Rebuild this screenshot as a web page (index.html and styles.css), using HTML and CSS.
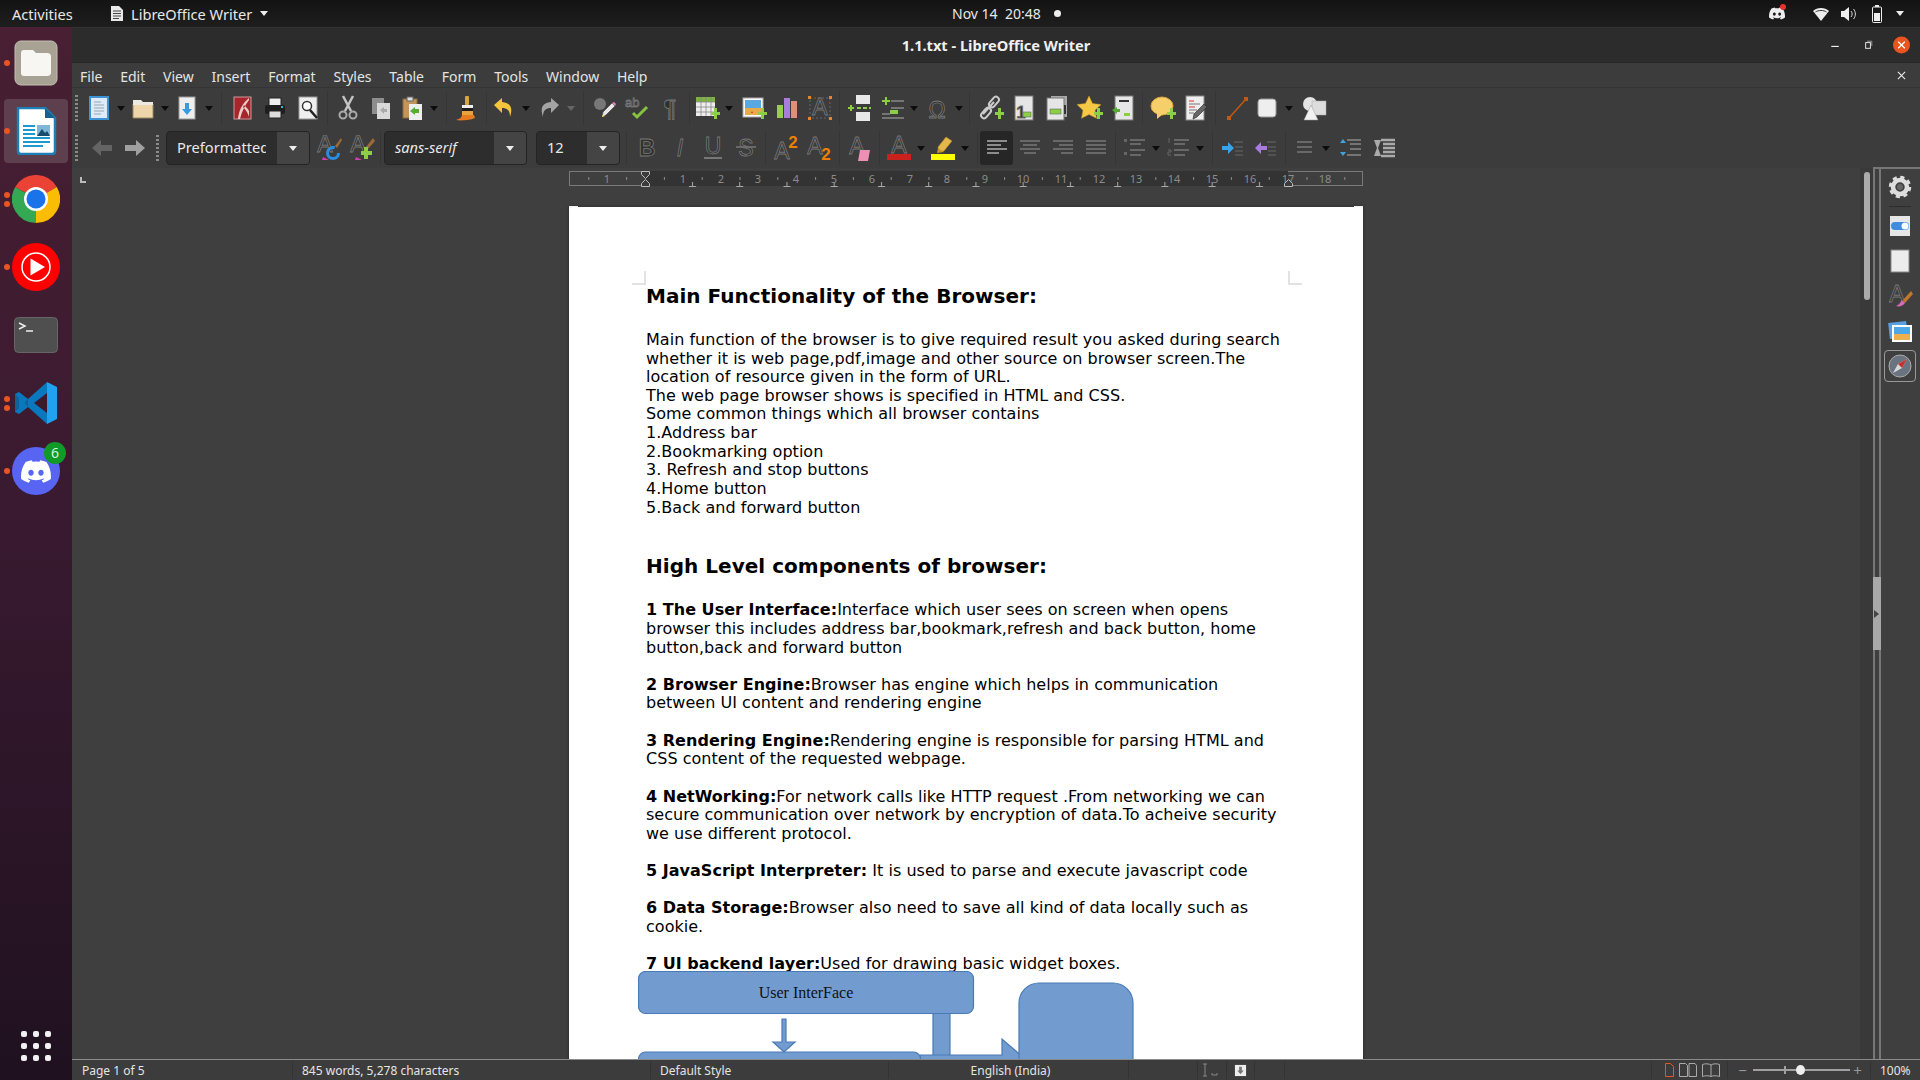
FILE: index.html
```html
<!DOCTYPE html>
<html lang="en">
<head>
    <meta charset="utf-8"/>
    <title>1.1.txt - LibreOffice Writer</title>
    <link rel="stylesheet" href="styles.css">
</head>
<body>
    <svg class="defs" xmlns="http://www.w3.org/2000/svg">
        <defs>
            <path id="plus" d="M17 17h3v-4h3v4h3v3h-3v4h-3v-4h-3z" fill="#8ccf45"/>
            <symbol id="i-new" viewBox="0 0 26 26"><rect x="4" y="2" width="18" height="22" fill="#dcebf7" stroke="#3d93d6" stroke-width="2"/><path d="M8 7h7M8 10h10M8 13h10M8 16h10M8 19h7" stroke="#9aa7b0"/></symbol>
            <symbol id="i-open" viewBox="0 0 26 26"><path d="M3 9h20v14H3z" fill="#efd6aa" stroke="#9c8660"/><path d="M3 5h8l2 2h10v3H3z" fill="#ece9e2"/></symbol>
            <symbol id="i-save" viewBox="0 0 26 26"><rect x="5" y="2" width="16" height="22" fill="#eee" stroke="#999"/><path d="M11 8h4v6h3l-5 6-5-6h3z" fill="#3a9ae0"/></symbol>
            <symbol id="i-pdf" viewBox="0 0 26 26"><rect x="5" y="2" width="17" height="22" fill="#a8252c" stroke="#c99"/><path d="M9 24C10 14 14 8 20 3v2C16 10 13 16 11 24zM14 12c3 3 5 6 6 10v-6c-1-2-3-4-5-6z" fill="#e8d0c8"/></symbol>
            <symbol id="i-print" viewBox="0 0 26 26"><rect x="7" y="3" width="12" height="8" fill="#eee" stroke="#222"/><rect x="3" y="10" width="20" height="9" rx="2" fill="#1e1e1e"/><rect x="7" y="16" width="12" height="7" fill="#ddd" stroke="#222"/><rect x="19" y="11" width="2" height="2" fill="#2bd"/></symbol>
            <symbol id="i-preview" viewBox="0 0 26 26"><rect x="4" y="2" width="18" height="22" fill="#eee" stroke="#999"/><circle cx="12" cy="11" r="4.500" fill="#fff" stroke="#333" stroke-width="1.500"/><path d="M15 15l7 8" stroke="#222" stroke-width="2.500"/></symbol>
            <symbol id="i-cut" viewBox="0 0 26 26"><path d="M10 16L18 1M16 16L8 1" stroke="#c4c4c4" stroke-width="2.500"/><circle cx="8" cy="20" r="3.500" fill="none" stroke="#aaa" stroke-width="2"/><circle cx="18" cy="20" r="3.500" fill="none" stroke="#aaa" stroke-width="2"/></symbol>
            <symbol id="i-copy" viewBox="0 0 26 26"><rect x="4" y="3" width="12" height="16" fill="#8e8e8e"/><rect x="9" y="8" width="13" height="16" fill="#d9d9d9"/><path d="M12 15l4-3v2h3v3h-3v2z" fill="#aaa"/></symbol>
            <symbol id="i-paste" viewBox="0 0 26 26"><rect x="4" y="4" width="14" height="19" fill="#c2965a" stroke="#8d6a3a"/><rect x="8" y="2" width="6" height="4" fill="#ddd" stroke="#666"/><rect x="10" y="9" width="13" height="16" fill="#eee"/><path d="M11 16l5-4v2h4v4h-4v2z" fill="#58ac32"/></symbol>
            <symbol id="i-clone" viewBox="0 0 26 26"><rect x="11" y="1" width="4" height="9" rx="1" fill="#d9a441"/><rect x="8" y="10" width="11" height="3" fill="#eee"/><rect x="8" y="13" width="11" height="3" fill="#1d1d1d"/><path d="M8 16h11v4H8z" fill="#e8a33d"/><path d="M2 25c4-1 6-3 6-5h12l1 3c-4 2-14 3-19 2z" fill="#e87b1e"/></symbol>
            <symbol id="i-undo" viewBox="0 0 26 26"><path d="M11 3L3 10l8 8v-5c5 0 8 2 8 9 3-9 1-14-8-15z" fill="#f2c53d"/></symbol>
            <symbol id="i-redo" viewBox="0 0 26 26"><path d="M15 3l8 7-8 8v-5c-5 0-8 2-8 9-3-9-1-14 8-15z" fill="#a4a4a4"/></symbol>
            <symbol id="i-find" viewBox="0 0 26 26"><circle cx="9" cy="9" r="6" fill="#777"/><path d="M11 22l1-5 9-9 3 3-9 9z" fill="#e8e8e8" stroke="#444" stroke-width=".7"/><path d="M21 8l3 3 1-2-2-2z" fill="#e77fc0"/><path d="M11 22l1-3 2 2z" fill="#f3e26d"/></symbol>
            <symbol id="i-spell" viewBox="0 0 26 26"><text x="1" y="12" class="glyph glyph-sm">ab</text><path d="M9 18l4 4 10-10" fill="none" stroke="#86c440" stroke-width="3"/></symbol>
            <symbol id="i-para" viewBox="0 0 26 26"><text x="13" y="22" class="glyph glyph-mid">¶</text></symbol>
            <symbol id="i-table" viewBox="0 0 26 26"><rect x="2" y="2" width="19" height="19" fill="#eee"/><rect x="2" y="2" width="19" height="5" fill="#7cb342"/><path d="M7 2v19M12 2v19M17 2v19M2 7h19M2 12h19M2 17h19" stroke="#888" stroke-width=".8"/><use href="#plus"/></symbol>
            <symbol id="i-image" viewBox="0 0 26 26"><rect x="2" y="3" width="20" height="19" fill="#fff" stroke="#aaa"/><rect x="4" y="5" width="16" height="8" fill="#5aa8e0"/><rect x="4" y="13" width="16" height="7" fill="#e8ab4c"/><path d="M11 16l1 2-2 0z" fill="#c33"/><use href="#plus"/></symbol>
            <symbol id="i-chart" viewBox="0 0 26 26"><rect x="3" y="10" width="6" height="13" fill="#94cf4f"/><rect x="10" y="3" width="6" height="20" fill="#a77fd9"/><rect x="17" y="6" width="6" height="17" fill="#e0907a"/></symbol>
            <symbol id="i-textbox" viewBox="0 0 26 26"><rect x="3" y="3" width="20" height="20" fill="none" stroke="#666" stroke-dasharray="2 2"/><text x="13" y="20" class="glyph glyph-big">A</text><path d="M1 1h3v3H1zM22 1h3v3h-3zM1 22h3v3H1zM22 22h3v3h-3z" fill="#e8842c"/></symbol>
            <symbol id="i-break" viewBox="0 0 26 26"><rect x="9" y="0" width="14" height="9" fill="#e8e8e8"/><rect x="9" y="17" width="14" height="9" fill="#e8e8e8"/><path d="M10 13h14" stroke="#8ccf45" stroke-width="2" stroke-dasharray="4 2"/><path d="M1 12h2v-2h2v2h2v2H5v2H3v-2H1z" fill="#8ccf45"/></symbol>
            <symbol id="i-field" viewBox="0 0 26 26"><path d="M11 6h13M11 13h13M2 19h8M2 23h22" stroke="#888" stroke-width="1.500"/><path d="M2 5h3V2h2v3h3v2H7v3H5V7H2zM10 15h8v4h-8z" fill="#8ccf45"/></symbol>
            <symbol id="i-omega" viewBox="0 0 26 26"><text x="13" y="23" class="glyph glyph-big">Ω</text></symbol>
            <symbol id="i-link" viewBox="0 0 26 26"><path d="M5 19l11-12" stroke="#ccc" stroke-width="2"/><rect x="13" y="1" width="6" height="12" rx="3" transform="rotate(40 16 7)" fill="none" stroke="#ccc" stroke-width="2"/><rect x="5" y="12" width="6" height="12" rx="3" transform="rotate(40 8 18)" fill="none" stroke="#ccc" stroke-width="2"/><use href="#plus"/></symbol>
            <symbol id="i-foot" viewBox="0 0 26 26"><rect x="4" y="1" width="18" height="24" fill="#e6e6e6" stroke="#777"/><text x="10" y="23" class="glyph glyph-note">1</text><rect x="12" y="17" width="8" height="5" fill="#8ccf45" stroke="#555" stroke-width=".5"/></symbol>
            <symbol id="i-end" viewBox="0 0 26 26"><rect x="7" y="1" width="16" height="21" fill="#aaa"/><rect x="3" y="3" width="17" height="22" fill="#e6e6e6" stroke="#777"/><rect x="6" y="14" width="11" height="5" fill="#8ccf45" stroke="#555" stroke-width=".5"/><path d="M21 10v9" stroke="#333" stroke-width="2"/></symbol>
            <symbol id="i-star" viewBox="0 0 26 26"><path d="M12 1l3.500 7.500L24 9.600l-6 5.700 1.500 8L12 19.500 4.500 23.300 6 15.300 0 9.600l8.500-1.100z" fill="#f6c945" stroke="#c99a1f" stroke-width=".5"/><use href="#plus"/></symbol>
            <symbol id="i-xref" viewBox="0 0 26 26"><rect x="5" y="1" width="18" height="24" fill="#e6e6e6" stroke="#777"/><path d="M9 6h10" stroke="#333" stroke-width="2"/><rect x="14" y="18" width="6" height="3" fill="#8ccf45"/><path d="M2 15l5-3v2h3v3H7v2z" fill="#58ac32"/></symbol>
            <symbol id="i-comment" viewBox="0 0 26 26"><ellipse cx="12" cy="11" rx="11" ry="9" fill="#f7cf6a" stroke="#d9a43a"/><path d="M7 18v6l6-5z" fill="#f7cf6a"/><use href="#plus"/></symbol>
            <symbol id="i-track" viewBox="0 0 26 26"><rect x="3" y="1" width="18" height="24" fill="#eee" stroke="#888"/><path d="M6 6h5M6 12h6" stroke="#d33"/><path d="M6 9h11M6 15h8M6 18h5" stroke="#777"/><path d="M10 24l1-5 10-10 3 3-10 10z" fill="#666" stroke="#222" stroke-width=".6"/></symbol>
            <symbol id="i-line" viewBox="0 0 26 26"><path d="M4 23L21 4" stroke="#bd5a17" stroke-width="1.500"/><path d="M2 21h4v4H2zM19 2h4v4h-4z" fill="#bd5a17"/></symbol>
            <symbol id="i-rect" viewBox="0 0 26 26"><rect x="4" y="4" width="18" height="18" rx="3" fill="#eee" stroke="#999"/></symbol>
            <symbol id="i-shapes" viewBox="0 0 26 26"><circle cx="8" cy="9" r="7" fill="#e5e5e5"/><rect x="10" y="6" width="14" height="14" fill="#ddd" stroke="#aaa" stroke-width=".5"/><path d="M9 10l7 15H2z" fill="#f2f2f2" stroke="#999" stroke-width=".5"/></symbol>
            <symbol id="i-back" viewBox="0 0 26 26"><path d="M12 5l-9 8 9 8v-5h11v-6H12z" fill="#646464"/></symbol>
            <symbol id="i-fwd" viewBox="0 0 26 26"><path d="M14 5l9 8-9 8v-5H3v-6h11z" fill="#a0a0a0"/></symbol>
            <symbol id="i-a-up" viewBox="0 0 26 26"><text x="9" y="17" class="glyph glyph-big">A</text><circle cx="17" cy="18" r="5.500" fill="none" stroke="#2a8de0" stroke-width="3" stroke-dasharray="27 7"/><path d="M25 3l-6 8 2 2 5-8z" fill="#9a6a3a"/><path d="M7 22l6 3H6z" fill="#d040b0"/></symbol>
            <symbol id="i-a-new" viewBox="0 0 26 26"><text x="9" y="17" class="glyph glyph-big">A</text><path d="M24 3l-7 9 2 2 7-8z" fill="#9a6a3a"/><path d="M7 22l6 3H6z" fill="#d040b0"/><path d="M12 16h3v-4h4v4h4v4h-4v4h-4v-4h-3z" fill="#8ccf45"/></symbol>
            <symbol id="i-b" viewBox="0 0 26 26"><text x="13" y="21" class="glyph glyph-big glyph-bold">B</text></symbol>
            <symbol id="i-i" viewBox="0 0 26 26"><text x="13" y="21" class="glyph glyph-big glyph-ital">I</text></symbol>
            <symbol id="i-u" viewBox="0 0 26 26"><text x="13" y="19" class="glyph glyph-big">U</text><path d="M4 23h18" stroke="#777" stroke-width="2"/></symbol>
            <symbol id="i-s" viewBox="0 0 26 26"><text x="13" y="21" class="glyph glyph-big">S</text><path d="M3 12h20" stroke="#777" stroke-width="1.500"/></symbol>
            <symbol id="i-sup" viewBox="0 0 26 26"><text x="9" y="24" class="glyph glyph-big">A</text><text x="20" y="13" class="orange">2</text></symbol>
            <symbol id="i-sub" viewBox="0 0 26 26"><text x="9" y="19" class="glyph glyph-big">A</text><text x="20" y="25" class="orange">2</text></symbol>
            <symbol id="i-clear" viewBox="0 0 26 26"><text x="10" y="19" class="glyph glyph-big">A</text><path d="M13 15h10l-2 11H11z" fill="#ee8fb4"/></symbol>
            <symbol id="i-color" viewBox="0 0 26 26"><text x="13" y="18" class="glyph glyph-big">A</text><rect x="1" y="19" width="24" height="6" fill="#c9211e"/></symbol>
            <symbol id="i-hl" viewBox="0 0 26 26"><path d="M9 17l-1-5 8-10 6 4-8 10z" fill="#e6b84a" stroke="#a8842c" stroke-width=".6"/><path d="M8 13l6 4-7 1z" fill="#c7942c"/><rect x="1" y="19" width="24" height="6" fill="#ff0"/></symbol>
            <symbol id="i-left" viewBox="0 0 26 26"><path d="M3 6h20M3 10h14M3 14h20M3 18h12" stroke="#8c8c8c" stroke-width="2"/></symbol>
            <symbol id="i-center" viewBox="0 0 26 26"><path d="M3 6h20M6 10h14M3 14h20M7 18h12" stroke="#777" stroke-width="1.500"/></symbol>
            <symbol id="i-right" viewBox="0 0 26 26"><path d="M3 6h20M9 10h14M3 14h20M11 18h12" stroke="#777" stroke-width="1.500"/></symbol>
            <symbol id="i-just" viewBox="0 0 26 26"><path d="M3 6h20M3 10h20M3 14h20M3 18h20" stroke="#777" stroke-width="1.500"/></symbol>
            <symbol id="i-bullet" viewBox="0 0 26 26"><path d="M9 5h15M9 9h11M9 15h15M9 20h11" stroke="#777" stroke-width="1.500"/><path d="M3 4h3v3H3zM3 17h3v3H3z" fill="#666"/></symbol>
            <symbol id="i-number" viewBox="0 0 26 26"><path d="M9 5h15M9 9h11M9 15h15M9 20h11" stroke="#777" stroke-width="1.500"/><path d="M4 3v5M3 15h3v2H3v3h3" stroke="#666" fill="none"/></symbol>
            <symbol id="i-more" viewBox="0 0 26 26"><path d="M14 7h9M15 12h8M15 16h8M15 20h8" stroke="#5a5a5a" stroke-width="1.500"/><path d="M8 7l6 6-6 6v-4H2v-4h6z" fill="#3aa3e8"/></symbol>
            <symbol id="i-less" viewBox="0 0 26 26"><path d="M14 7h9M15 12h8M15 16h8M15 20h8" stroke="#5a5a5a" stroke-width="1.500"/><path d="M8 7l-6 6 6 6v-4h6v-4H8z" fill="#a97be0"/></symbol>
            <symbol id="i-spacing" viewBox="0 0 26 26"><path d="M6 7h15M6 12h15M6 17h15" stroke="#777" stroke-width="1.500"/></symbol>
            <symbol id="i-para-up" viewBox="0 0 26 26"><path d="M9 5h14M12 9h11M12 14h11M9 20h14" stroke="#888" stroke-width="1.500"/><path d="M5 4l3 4H2zM5 21l3-4H2z" fill="#3aa3e8"/></symbol>
            <symbol id="i-para-down" viewBox="0 0 26 26"><path d="M10 5h14M12 9h12M12 13h12M12 17h12M10 21h14" stroke="#aaa" stroke-width="2.500"/><path d="M3 5h7l-3 8 3 8H3l3-8z" fill="#aaa"/></symbol>
            <symbol id="discord" viewBox="0 0 127.140 96.360"><path d="M107.700,8.070A105.150,105.150,0,0,0,81.470,0a72.060,72.060,0,0,0-3.360,6.830A97.680,97.680,0,0,0,49,6.830,72.370,72.370,0,0,0,45.640,0,105.890,105.890,0,0,0,19.390,8.090C2.790,32.650-1.710,56.600.54,80.210h0A105.730,105.730,0,0,0,32.710,96.360,77.700,77.700,0,0,0,39.600,85.250a68.420,68.420,0,0,1-10.850-5.180c.91-.66,1.800-1.340,2.660-2a75.570,75.570,0,0,0,64.320,0c.87.71,1.760,1.390,2.660,2a68.680,68.680,0,0,1-10.870,5.190,77,77,0,0,0,6.890,11.100A105.250,105.250,0,0,0,126.600,80.220h0C129.240,52.840,122.090,29.110,107.700,8.070ZM42.450,65.690C36.180,65.690,31,60,31,53s5-12.740,11.430-12.740S54,46,53.890,53,48.840,65.690,42.450,65.690Zm42.240,0C78.410,65.690,73.250,60,73.250,53s5-12.740,11.440-12.740S96.230,46,96.120,53,91.080,65.690,84.690,65.690Z" fill="currentColor"/></symbol>
        </defs>
    </svg>

    <div class="topbar">
        <div class="top-left">
            <span class="activities">Activities</span>
            <svg class="top-doc" viewBox="0 0 12 15"><path d="M0 0h8l4 4v11H0z" fill="#e8e8e8"/><path d="M2 5h8M2 7.500h8M2 10h8M2 12.500h6" stroke="#444"/></svg>
            <span>LibreOffice Writer</span>
            <span class="caret"></span>
        </div>
        <div class="clock">Nov 14&nbsp; 20:48</div>
        <span class="rec-dot"></span>
        <div class="tray">
            <span class="tray-discord"><svg class="tray-logo"><use href="#discord"/></svg><span class="tray-alert"></span></span>
            <svg class="tray-wifi" viewBox="0 0 16 14"><path d="M0 4C4 0 12 0 16 4L8 14z" fill="#eee"/><path d="M2.500 5C5 3 11 3 13.500 5" stroke="#333" fill="none"/></svg>
            <svg class="tray-vol" viewBox="0 0 16 14"><path d="M0 4h3l5-4v14l-5-4H0z" fill="#eee"/><path d="M10 4c1.500 2 1.500 4 0 6M12.500 2c2.500 3 2.500 7 0 10" stroke="#ddd" fill="none"/></svg>
            <svg class="tray-batt" viewBox="0 0 10 18"><path d="M3 0h4v2H3z" fill="#eee"/><rect x=".5" y="2" width="9" height="15.500" rx="1" fill="none" stroke="#eee"/><rect x="2" y="8" width="6" height="8" fill="#eee"/></svg>
            <span class="caret"></span>
        </div>
    </div>

    <div class="desktop">
        <div class="dock">
            <div class="dock-item">
                <span class="run-dot"></span>
                <svg class="dock-icon" viewBox="0 0 48 48"><rect x="3" y="2" width="42" height="44" rx="6" fill="#a8a294" stroke="#c4bfb2"/><path d="M9 14c0-2 1-3 3-3h9l3 3h11c2 0 4 1 4 3v17c0 2-2 3-4 3H12c-2 0-3-1-3-3z" fill="#f7f6f3"/></svg>
            </div>
            <div class="dock-item dock-active">
                <span class="run-dot"></span>
                <svg class="dock-icon" viewBox="0 0 48 48"><path d="M6 1h27l10 10v33c0 2-1 3-3 3H9c-2 0-3-1-3-3z" fill="#fff" stroke="#1d7fb8" stroke-width="2.500"/><path d="M33 1v10h10z" fill="#16628e"/><path d="M11 19h12M11 23h12M11 27h12M11 31h27M11 35h27M11 39h20" stroke="#1d99d0" stroke-width="2"/><rect x="25" y="18" width="13" height="11" fill="#7fb8d6"/><path d="M25 29l5-7 3 4 2-2 3 5z" fill="#184c6c"/></svg>
            </div>
            <div class="dock-item">
                <span class="run-dot run-dot-a"></span>
                <span class="run-dot run-dot-b"></span>
                <svg class="dock-icon" viewBox="0 0 48 48"><path d="M24 24L3.200 12A24 24 0 0 1 44.800 12z" fill="#ea4335"/><path d="M24 24L44.800 12A24 24 0 0 1 24 48z" fill="#fbbc04"/><path d="M24 24L24 48A24 24 0 0 1 3.200 12z" fill="#34a853"/><circle cx="24" cy="24" r="12" fill="#fff"/><circle cx="24" cy="24" r="9.500" fill="#1a73e8"/></svg>
            </div>
            <div class="dock-item">
                <span class="run-dot"></span>
                <svg class="dock-icon" viewBox="0 0 48 48"><circle cx="24" cy="24" r="24" fill="#f00"/><circle cx="24" cy="24" r="14" fill="none" stroke="#fff" stroke-width="1.500"/><path d="M18.500 15.500L33 24l-14.500 8.500z" fill="#fff"/></svg>
            </div>
            <div class="dock-item">
                <svg class="dock-icon" viewBox="0 0 48 48"><rect x="2.500" y="6.500" width="43" height="35" rx="4" fill="#4f4f4f" stroke="#666"/><path d="M7 12l6 3-6 3" fill="none" stroke="#eee" stroke-width="1.500"/><path d="M14 20h7" stroke="#eee" stroke-width="1.500"/></svg>
            </div>
            <div class="dock-item">
                <span class="run-dot run-dot-a"></span>
                <span class="run-dot run-dot-b"></span>
                <svg class="dock-icon" viewBox="0 0 48 48"><path d="M35 3L16 20 7 13 3 15v18l4 2 9-7 19 17z" fill="#0a78bd"/><path d="M3 15l9 9-9 9zM12 24l4-4 0 8z" fill="#11609a"/><path d="M7 18l7 6-7 6z" fill="#0a78bd"/><path d="M35 14L22 24l13 10z" fill="#3a1a2c"/><path d="M35 3l10 5v32l-10 5z" fill="#21a2f0"/></svg>
            </div>
            <div class="dock-item">
                <span class="run-dot"></span>
                <span class="dock-discord"><svg class="discord-logo"><use href="#discord"/></svg></span>
                <span class="badge">6</span>
            </div>
            <div class="apps-grid">
                <i></i><i></i><i></i><i></i><i></i><i></i><i></i><i></i><i></i>
            </div>
        </div>

        <div class="window">
            <div class="titlebar">
                <span></span>
                <span class="title">1.1.txt - LibreOffice Writer</span>
                <div class="win-btns">
                    <svg class="win-btn" viewBox="0 0 33 36"><path d="M12 19.500h8" stroke="#eee" stroke-width="1.200"/></svg>
                    <svg class="win-btn" viewBox="0 0 33 36"><rect x="13.500" y="15.500" width="5" height="6" fill="none" stroke="#eee"/><path d="M15 14h5v5" fill="none" stroke="#999"/></svg>
                    <svg class="win-btn" viewBox="0 0 33 36"><circle cx="16.500" cy="18" r="9" fill="#e95420"/><path d="M13 14.500l7 7m0-7l-7 7" stroke="#fff" stroke-width="1.300"/></svg>
                </div>
            </div>

            <div class="menubar">
                <span class="menu-item">File</span>
                <span class="menu-item">Edit</span>
                <span class="menu-item">View</span>
                <span class="menu-item">Insert</span>
                <span class="menu-item">Format</span>
                <span class="menu-item">Styles</span>
                <span class="menu-item">Table</span>
                <span class="menu-item">Form</span>
                <span class="menu-item">Tools</span>
                <span class="menu-item">Window</span>
                <span class="menu-item">Help</span>
                <svg class="doc-close" viewBox="0 0 10 10"><path d="M1 1l8 8m0-8L1 9" stroke="#eee" stroke-width="1.200"/></svg>
            </div>

            <div class="toolbar">
                <span class="grip"></span>
                <span class="tool split"><svg class="ic"><use href="#i-new"/></svg></span><span class="dd"></span>
                <span class="tool split"><svg class="ic"><use href="#i-open"/></svg></span><span class="dd"></span>
                <span class="tool split"><svg class="ic"><use href="#i-save"/></svg></span><span class="dd"></span>
                <span class="sep"></span>
                <span class="tool"><svg class="ic"><use href="#i-pdf"/></svg></span>
                <span class="tool"><svg class="ic"><use href="#i-print"/></svg></span>
                <span class="tool"><svg class="ic"><use href="#i-preview"/></svg></span>
                <span class="sep"></span>
                <span class="tool"><svg class="ic"><use href="#i-cut"/></svg></span>
                <span class="tool"><svg class="ic"><use href="#i-copy"/></svg></span>
                <span class="tool split m2"><svg class="ic"><use href="#i-paste"/></svg></span><span class="dd"></span>
                <span class="sep"></span>
                <span class="tool"><svg class="ic"><use href="#i-clone"/></svg></span>
                <span class="sep"></span>
                <span class="tool split m1"><svg class="ic"><use href="#i-undo"/></svg></span><span class="dd"></span>
                <span class="tool split m1"><svg class="ic"><use href="#i-redo"/></svg></span><span class="dd dd-off"></span>
                <span class="sep"></span>
                <span class="tool"><svg class="ic"><use href="#i-find"/></svg></span>
                <span class="tool"><svg class="ic"><use href="#i-spell"/></svg></span>
                <span class="tool"><svg class="ic"><use href="#i-para"/></svg></span>
                <span class="sep"></span>
                <span class="tool split m1"><svg class="ic"><use href="#i-table"/></svg></span><span class="dd"></span>
                <span class="tool mn1"><svg class="ic"><use href="#i-image"/></svg></span>
                <span class="tool"><svg class="ic"><use href="#i-chart"/></svg></span>
                <span class="tool"><svg class="ic"><use href="#i-textbox"/></svg></span>
                <span class="sep"></span>
                <span class="tool"><svg class="ic"><use href="#i-break"/></svg></span>
                <span class="tool split m4"><svg class="ic"><use href="#i-field"/></svg></span><span class="dd dd-tight"></span>
                <span class="tool split m2"><svg class="ic"><use href="#i-omega"/></svg></span><span class="dd"></span>
                <span class="sep mn2"></span>
                <span class="tool m1"><svg class="ic"><use href="#i-link"/></svg></span>
                <span class="tool"><svg class="ic"><use href="#i-foot"/></svg></span>
                <span class="tool"><svg class="ic"><use href="#i-end"/></svg></span>
                <span class="tool"><svg class="ic"><use href="#i-star"/></svg></span>
                <span class="tool"><svg class="ic"><use href="#i-xref"/></svg></span>
                <span class="sep"></span>
                <span class="tool"><svg class="ic"><use href="#i-comment"/></svg></span>
                <span class="tool"><svg class="ic"><use href="#i-track"/></svg></span>
                <span class="sep"></span>
                <span class="tool m2"><svg class="ic"><use href="#i-line"/></svg></span>
                <span class="tool split"><svg class="ic"><use href="#i-rect"/></svg></span><span class="dd"></span>
                <span class="tool"><svg class="ic"><use href="#i-shapes"/></svg></span>
            </div>

            <div class="toolbar">
                <span class="grip grip-b"></span>
                <span class="tool"><svg class="ic"><use href="#i-back"/></svg></span>
                <span class="tool"><svg class="ic"><use href="#i-fwd"/></svg></span>
                <span class="grip grip-c"></span>
                <div class="combo combo-style"><span class="combo-text">Preformatted Text</span><span class="combo-btn"></span></div>
                <span class="tool m2"><svg class="ic"><use href="#i-a-up"/></svg></span>
                <span class="tool"><svg class="ic"><use href="#i-a-new"/></svg></span>
                <span class="sep sep-thin"></span>
                <div class="combo combo-font m1"><span class="combo-text combo-ital">sans-serif</span><span class="combo-btn"></span></div>
                <div class="combo combo-size"><span class="combo-text">12</span><span class="combo-btn"></span></div>
                <span class="sep m3"></span>
                <span class="tool"><svg class="ic"><use href="#i-b"/></svg></span>
                <span class="tool"><svg class="ic"><use href="#i-i"/></svg></span>
                <span class="tool"><svg class="ic"><use href="#i-u"/></svg></span>
                <span class="tool"><svg class="ic"><use href="#i-s"/></svg></span>
                <span class="sep"></span>
                <span class="tool"><svg class="ic"><use href="#i-sup"/></svg></span>
                <span class="tool"><svg class="ic"><use href="#i-sub"/></svg></span>
                <span class="sep m1"></span>
                <span class="tool"><svg class="ic"><use href="#i-clear"/></svg></span>
                <span class="sep"></span>
                <span class="tool split m3"><svg class="ic"><use href="#i-color"/></svg></span><span class="dd"></span>
                <span class="tool split"><svg class="ic"><use href="#i-hl"/></svg></span><span class="dd"></span>
                <span class="sep"></span>
                <span class="tool tool-on mn1"><svg class="ic"><use href="#i-left"/></svg></span>
                <span class="tool"><svg class="ic"><use href="#i-center"/></svg></span>
                <span class="tool"><svg class="ic"><use href="#i-right"/></svg></span>
                <span class="tool"><svg class="ic"><use href="#i-just"/></svg></span>
                <span class="sep"></span>
                <span class="tool split m2"><svg class="ic"><use href="#i-bullet"/></svg></span><span class="dd"></span>
                <span class="tool split"><svg class="ic"><use href="#i-number"/></svg></span><span class="dd"></span>
                <span class="sep"></span>
                <span class="tool"><svg class="ic"><use href="#i-more"/></svg></span>
                <span class="tool"><svg class="ic"><use href="#i-less"/></svg></span>
                <span class="sep"></span>
                <span class="tool split m2"><svg class="ic"><use href="#i-spacing"/></svg></span><span class="dd"></span>
                <span class="tool mn1"><svg class="ic"><use href="#i-para-up"/></svg></span>
                <span class="tool"><svg class="ic"><use href="#i-para-down"/></svg></span>
            </div>

            <div class="work">
                <div class="canvas">
                    <div class="ruler-row">
                        <span class="ruler-corner"></span>
                        <svg class="ruler" viewBox="0 0 794 15">
                            <defs>
                                <pattern id="halfticks" x="94.900" y="0" width="37.800" height="15" patternUnits="userSpaceOnUse"><path d="M.5 6v3" stroke="#8a8a8a"/></pattern>
                                <pattern id="tabstops" x="119" y="0" width="47.244" height="16" patternUnits="userSpaceOnUse"><path d="M4.500 11v4M1 15.500h7" stroke="#aaa" fill="none"/></pattern>
                            </defs>
                            <rect x=".5" y=".5" width="793" height="14" fill="none" stroke="#7a7a7a"/>
                            <rect x="76" y="0" width="643" height="15" fill="#333"/>
                            <rect x="10" y="0" width="770" height="15" fill="url(#halfticks)"/>
                            <rect x="119" y="0" width="600" height="16" fill="url(#tabstops)"/>
                            <g class="ruler-nums">
                                <text x="38" y="11.500">1</text>
                                <text x="114" y="11.500">1</text><text x="152" y="11.500">2</text><text x="189" y="11.500">3</text><text x="227" y="11.500">4</text><text x="265" y="11.500">5</text><text x="303" y="11.500">6</text><text x="341" y="11.500">7</text><text x="378" y="11.500">8</text><text x="416" y="11.500">9</text><text x="454" y="11.500">10</text><text x="492" y="11.500">11</text><text x="530" y="11.500">12</text><text x="567" y="11.500">13</text><text x="605" y="11.500">14</text><text x="643" y="11.500">15</text><text x="681" y="11.500">16</text><text x="719" y="11.500">17</text><text x="756" y="11.500">18</text>
                            </g>
                            <path d="M72.500.5h8v3l-4 4-4-4zM72.500 15.500v-3l4-4 4 4v3z" fill="#3c3c3c" stroke="#bbb"/>
                            <path d="M715.500 15.500v-3l4-4 4 4v3z" fill="#3c3c3c" stroke="#bbb"/>
                        </svg>
                    </div>

                    <div class="page">
                        <span class="crop crop-l"></span>
                        <span class="crop crop-r"></span>

                        <h2 class="doc-head">Main Functionality of the Browser:</h2>
                        <p class="doc-p">Main function of the browser is to give required result you asked during search whether it is web page,pdf,image and other source on browser screen.The location of resource given in the form of URL.<br>The web page browser shows is specified in HTML and CSS.<br>Some common things which all browser contains<br>1.Address bar<br>2.Bookmarking option<br>3. Refresh and stop buttons<br>4.Home button<br>5.Back and forward button</p>

                        <h2 class="doc-head doc-head-2">High Level components of browser:</h2>
                        <p class="doc-p"><b>1 The User Interface:</b>Interface which user sees on screen when opens browser this includes address bar,bookmark,refresh and back button, home button,back and forward button</p>
                        <p class="doc-p"><b>2 Browser Engine:</b>Browser has engine which helps in communication between UI content and rendering engine</p>
                        <p class="doc-p"><b>3 Rendering Engine:</b>Rendering engine is responsible for parsing HTML and CSS content of the requested webpage.</p>
                        <p class="doc-p"><b>4 NetWorking:</b>For network calls like HTTP request .From networking we can secure communication over network by encryption of data.To acheive security we use different protocol.</p>
                        <p class="doc-p"><b>5 JavaScript Interpreter:</b> It is used to parse and execute javascript code</p>
                        <p class="doc-p"><b>6 Data Storage:</b>Browser also need to save all kind of data locally such as cookie.</p>
                        <p class="doc-p"><b>7 UI backend layer:</b>Used for drawing basic widget boxes.</p>

                        <svg class="diagram" viewBox="0 0 500 120">
                            <rect width="500" height="120" fill="#fff"/>
                            <g class="shape">
                                <path d="M295 42h17v60h-17z"/>
                                <path d="M282 84h82V68l30 26-30 26H282z"/>
                                <rect x=".5" y=".5" width="335" height="42" rx="7"/>
                                <rect x=".5" y="81" width="282" height="60" rx="7"/>
                                <rect x="381" y="12" width="114" height="120" rx="20"/>
                                <path d="M144 48h4v23h9l-11 10-11-10h9z"/>
                            </g>
                            <text class="shape-label" x="168" y="27" text-anchor="middle">User InterFace</text>
                        </svg>
                    </div>
                </div>
                <div class="vscroll"><span class="vthumb"></span></div>
                <div class="sidebar">
                    <span class="side-handle"></span>
                    <div class="side-deck">
                        <svg class="side-ic gear" viewBox="0 0 26 26"><circle cx="13" cy="13" r="9.500" fill="none" stroke="#ddd" stroke-width="3.500" stroke-dasharray="4 3.460"/><circle cx="13" cy="13" r="7" fill="none" stroke="#ddd" stroke-width="4.500"/><circle cx="13" cy="13" r="3" fill="#666"/></svg>
                        <span class="side-rule"></span>
                        <svg class="side-ic" viewBox="0 0 26 26"><rect x="3" y="3" width="20" height="20" fill="#e6e6e6"/><rect x="4" y="9" width="18" height="8" rx="4" fill="#3f8be0"/><circle cx="18" cy="13" r="3.500" fill="#fff"/></svg>
                        <svg class="side-ic" viewBox="0 0 26 26"><rect x="4" y="2" width="18" height="22" fill="#ececec" stroke="#888"/></svg>
                        <svg class="side-ic" viewBox="0 0 26 26"><text x="10" y="19" class="glyph glyph-big">A</text><path d="M24 8l-8 9 2 3 8-9z" fill="#c0762c"/><path d="M15 17l3 3c-2 3-6 4-9 3 3-1 4-3 6-6z" fill="#d86ab8"/></svg>
                        <svg class="side-ic" viewBox="0 0 26 26"><rect x="2" y="4" width="18" height="16" fill="#5aa0e0" transform="rotate(-6 11 12)"/><rect x="5" y="7" width="20" height="17" fill="#fff"/><rect x="7" y="9" width="16" height="7" fill="#4ea8e8"/><rect x="7" y="16" width="16" height="6" fill="#eeb04c"/></svg>
                        <span class="side-on"><svg class="side-ic side-ic-on" viewBox="0 0 26 26"><circle cx="13" cy="13" r="11" fill="#6a7480" stroke="#aaa"/><path d="M20 6l-5 9-9 5 5-9z" fill="#d9d9d9"/><path d="M20 6l-9 5 4 4z" fill="#c9302c"/></svg></span>
                    </div>
                </div>
            </div>

            <div class="statusbar">
                <span class="cell cell-page">Page 1 of 5</span>
                <span class="cell cell-words">845 words, 5,278 characters</span>
                <span class="cell cell-style">Default Style</span>
                <span class="cell cell-lang">English (India)</span>
                <span class="cell cell-blank"></span>
                <span class="cell cell-sel"><svg class="st-ic" viewBox="0 0 18 14"><path d="M2 1h4M4 1v12M2 13h4" stroke="#888" fill="none"/><path d="M11 10v2h5v-2" stroke="#888" fill="none"/></svg></span>
                <span class="cell cell-save"><svg class="st-ic" viewBox="0 0 14 14"><rect x="1" y="1" width="12" height="12" fill="#eee"/><path d="M5.500 3h3v4h2L7 11 3.500 7h2z" fill="#777"/></svg></span>
                <span class="cell cell-sign"></span>
                <span class="cell cell-fill"></span>
                <span class="cell cell-views">
                    <svg class="view-ic" viewBox="0 0 9 14"><path d="M.5.5h5l3 3v10H.5z" fill="none" stroke="#e95420"/></svg>
                    <svg class="view-two" viewBox="0 0 18 14"><path d="M.5.5h6l2 2v11h-8zM10 .5h6l1.500 2v11H10z" fill="none" stroke="#aaa"/></svg>
                    <svg class="view-two" viewBox="0 0 18 14"><path d="M9 2C7 .5 3 .5 .5 1.500v12C3 12.500 7 12.500 9 13.500c2-1 6-1 8.500 0v-12C15 .5 11 .5 9 2zv11.500" fill="none" stroke="#aaa"/></svg>
                </span>
                <span class="cell cell-zoom">
                    <span class="zoom-sign">−</span>
                    <span class="zoom-track"><span class="zoom-mid"></span><span class="zoom-thumb"></span></span>
                    <span class="zoom-sign">+</span>
                </span>
                <span class="zoom-val">100%</span>
            </div>
        </div>
    </div>
</body>
</html>
```

FILE: styles.css
```css
*{
    margin: 0;
    padding: 0;
    box-sizing: border-box;
}
body{
    width: 1920px;
    height: 1080px;
    overflow: hidden;
    display: flex;
    flex-direction: column;
    background: #3c3c3c;
    color: #eee;
    font-family: "Noto Sans", sans-serif;
    font-size: 14px;
}
.defs{
    position: absolute;
    width: 0;
    height: 0;
}

/* top bar */
.topbar{
    height: 27px;
    flex: none;
    display: flex;
    align-items: center;
    background: linear-gradient(#131313, #1e1e1e);
    color: #e8e8e8;
    font-size: 14.6px;
}
.top-left{
    width: 952px;
    display: flex;
    align-items: center;
}
.activities{
    margin-left: 12px;
    width: 99px;
}
.top-doc{
    width: 12px;
    height: 15px;
    margin-right: 8px;
}
.clock{
    font-size: 14px;
}
.caret{
    width: 0;
    height: 0;
    margin-left: 8px;
    border-left: 4.5px solid transparent;
    border-right: 4.5px solid transparent;
    border-top: 5px solid #eee;
}
.rec-dot{
    width: 7px;
    height: 7px;
    border-radius: 50%;
    background: #eee;
    margin-left: 13px;
}
.tray{
    margin-left: auto;
    display: flex;
    align-items: center;
    padding-right: 16px;
}
.tray-discord{
    position: relative;
    display: flex;
    margin-right: 28px;
}
.tray-logo{
    width: 16px;
    height: 13px;
    color: #eee;
}
.tray-alert{
    position: absolute;
    right: -1px;
    top: -3px;
    width: 6px;
    height: 6px;
    border-radius: 50%;
    background: #e5322d;
}
.tray-wifi{
    width: 16px;
    height: 14px;
    margin-right: 12px;
}
.tray-vol{
    width: 16px;
    height: 14px;
    margin-right: 15px;
}
.tray-batt{
    width: 10px;
    height: 18px;
    margin-right: 6px;
}

/* dock */
.desktop{
    flex: 1;
    display: flex;
    min-height: 0;
}
.dock{
    width: 72px;
    flex: none;
    display: flex;
    flex-direction: column;
    padding-top: 2px;
    background: linear-gradient(#481f33 0%, #3a1a30 45%, #1f1120 100%);
}
.dock-item{
    position: relative;
    height: 68px;
    flex: none;
    display: flex;
    align-items: center;
    justify-content: center;
}
.dock-active::before{
    content: "";
    position: absolute;
    left: 4px;
    right: 4px;
    top: 2px;
    bottom: 2px;
    border-radius: 4px;
    background: #5d3f4e;
}
.dock-icon{
    position: relative;
    width: 48px;
    height: 48px;
}
.run-dot{
    position: absolute;
    left: 4px;
    top: 31px;
    width: 6px;
    height: 6px;
    border-radius: 50%;
    background: #e95420;
}
.run-dot-a{
    top: 27px;
}
.run-dot-b{
    top: 36px;
}
.dock-discord{
    width: 48px;
    height: 48px;
    border-radius: 50%;
    background: #5865f2;
    display: flex;
    align-items: center;
    justify-content: center;
}
.discord-logo{
    width: 30px;
    height: 23px;
    color: #fff;
}
.badge{
    position: absolute;
    left: 44px;
    top: 5px;
    width: 22px;
    height: 22px;
    border-radius: 50%;
    background: #109a27;
    color: #d8f5dc;
    font-size: 14px;
    line-height: 22px;
    text-align: center;
}
.apps-grid{
    margin-top: auto;
    margin-bottom: 19px;
    align-self: center;
    display: grid;
    grid-template-columns: repeat(3, 6px);
    gap: 6px;
}
.apps-grid i{
    height: 6px;
    border-radius: 2px;
    background: #f2f2f2;
}

/* window chrome */
.window{
    flex: 1;
    min-width: 0;
    display: flex;
    flex-direction: column;
}
.titlebar{
    height: 36px;
    flex: none;
    display: grid;
    grid-template-columns: 1fr auto 1fr;
    align-items: center;
    background: #2c2c2c;
    border-top: 1px solid #333;
    border-bottom: 1px solid #262626;
}
.title{
    font-weight: 700;
    font-size: 14.6px;
    color: #f0f0f0;
}
.win-btns{
    display: flex;
    justify-content: flex-end;
    padding-right: 2px;
}
.win-btn{
    width: 33px;
    height: 34px;
}
.menubar{
    height: 25px;
    flex: none;
    display: flex;
    align-items: center;
    padding-left: 8px;
    padding-top: 2px;
    background: #3c3c3c;
    border-bottom: 1px solid #343434;
}
.menu-item{
    margin-right: 17.8px;
    color: #e4e4e4;
}
.doc-close{
    width: 9px;
    height: 9px;
    margin-left: auto;
    margin-right: 14px;
    margin-bottom: 2px;
}

/* toolbars */
.toolbar{
    height: 40px;
    flex: none;
    display: flex;
    align-items: center;
    background: #3c3c3c;
}
.grip{
    width: 3px;
    height: 26px;
    margin-left: 3px;
    margin-right: 8px;
    background: repeating-linear-gradient(#8a8a8a 0 2px, transparent 2px 4px);
}
.grip-b{
    margin-right: 7px;
}
.grip-c{
    margin-left: 5px;
    margin-right: 7px;
}
.tool{
    width: 33px;
    height: 34px;
    flex: none;
    display: flex;
    align-items: center;
    justify-content: center;
}
.tool.split{
    width: 26px;
}
.tool-on{
    background: #262626;
    border-radius: 3px;
}
.ic{
    width: 26px;
    height: 26px;
    flex: none;
}
.dd{
    width: 18px;
    height: 34px;
    flex: none;
    display: flex;
    align-items: center;
    justify-content: center;
}
.dd::after{
    content: "";
    border-left: 4px solid transparent;
    border-right: 4px solid transparent;
    border-top: 5px solid #0c0c0c;
}
.dd-off::after{
    border-top-color: #666;
}
.dd-tight{
    width: 16px;
}
.sep{
    width: 7px;
    height: 32px;
    flex: none;
    background: linear-gradient(#353535, #353535) center / 1px 100% no-repeat;
}
.sep-thin{
    width: 5px;
}
.m1{ margin-left: 1px; }
.m2{ margin-left: 2px; }
.m3{ margin-left: 3px; }
.m4{ margin-left: 4px; }
.mn1{ margin-left: -1px; }
.mn2{ margin-left: -2px; }

.combo{
    height: 34px;
    flex: none;
    display: flex;
    background: #2d2d2d;
    border: 1px solid #232323;
    border-radius: 4px;
    overflow: hidden;
    color: #e8e8e8;
    font-size: 14.6px;
}
.combo-style{
    width: 144px;
}
.combo-font{
    width: 143px;
}
.combo-size{
    width: 84px;
    margin-left: 9px;
}
.combo-text{
    flex: 1;
    min-width: 0;
    padding-left: 10px;
    margin-right: 11px;
    line-height: 30px;
    white-space: nowrap;
    overflow: hidden;
}
.combo-ital{
    font-style: italic;
}
.combo-btn{
    width: 32px;
    flex: none;
    background: #444;
    display: flex;
    align-items: center;
    justify-content: center;
}
.combo-btn::after{
    content: "";
    border-left: 4.5px solid transparent;
    border-right: 4.5px solid transparent;
    border-top: 5px solid #eee;
}

/* svg glyph icons */
.glyph{
    font-family: "Liberation Sans", sans-serif;
    text-anchor: middle;
    fill: #303030;
    stroke: #787878;
    stroke-width: .8px;
}
.glyph-sm{
    font-size: 13px;
    text-anchor: start;
}
.glyph-mid{
    font-size: 24px;
}
.glyph-big{
    font-size: 23px;
}
.glyph-bold{
    font-weight: 700;
}
.glyph-ital{
    font-style: italic;
}
.glyph-note{
    font-size: 17px;
    font-weight: 700;
}
.orange{
    font-family: "Liberation Sans", sans-serif;
    font-size: 17px;
    font-weight: 700;
    text-anchor: middle;
    fill: #f08000;
}

/* document area */
.work{
    flex: 1;
    min-height: 0;
    display: flex;
    background: #3f3f3f;
}
.canvas{
    flex: 1;
    min-width: 0;
    overflow: hidden;
}
.ruler-row{
    display: grid;
    grid-template-columns: 1fr 794px 1fr;
    align-items: start;
    margin-top: 3px;
    height: 15px;
}
.ruler-corner{
    width: 6px;
    height: 6px;
    margin: 6px 0 0 8px;
    border-left: 2px solid #bbb;
    border-bottom: 2px solid #bbb;
}
.ruler{
    width: 794px;
    height: 15px;
    overflow: visible;
}
.ruler-nums text{
    font-family: "Noto Sans", sans-serif;
    font-size: 11px;
    text-anchor: middle;
    fill: #8c8c8c;
}
.page{
    position: relative;
    width: 794px;
    height: 1123px;
    margin: 21px auto 0;
    padding: 77.6px 75px 0 77px;
    background: #fff;
    box-shadow: 0 0 3px #262626;
    color: #000;
    font-family: "DejaVu Sans", sans-serif;
    font-size: 16px;
    line-height: 18.63px;
    letter-spacing: .03px;
}
.page::before, .page::after{
    content: "";
    position: absolute;
    top: -1px;
    width: 9px;
    height: 1px;
    background: #eee;
}
.page::before{
    left: 0;
}
.page::after{
    right: 0;
}
.crop{
    position: absolute;
    top: 64px;
    width: 14px;
    height: 14px;
    border-bottom: 2px solid #e2e2e2;
}
.crop-l{
    left: 63px;
    border-right: 2px solid #e2e2e2;
}
.crop-r{
    right: 61px;
    border-left: 2px solid #e2e2e2;
}
.doc-head{
    font-size: 20px;
    line-height: 23.3px;
    font-weight: 700;
    margin-bottom: 23px;
}
.doc-head-2{
    margin-top: 37.85px;
}
.doc-p{
    margin-bottom: 18.63px;
}
.diagram{
    position: absolute;
    left: 69px;
    top: 764px;
    width: 500px;
    height: 120px;
}
.shape path, .shape rect{
    fill: #729ccf;
    stroke: #4a7ab5;
    stroke-width: 1.2px;
}
.shape-label{
    font-family: "Liberation Serif", serif;
    font-size: 16px;
    letter-spacing: 0;
    fill: #111;
}

/* scrollbar + sidebar */
.vscroll{
    width: 13px;
    flex: none;
    background: #393939;
    padding: 4px 3px 0 4px;
}
.vthumb{
    display: block;
    width: 6px;
    height: 128px;
    border-radius: 3px;
    background: #aaa;
}
.sidebar{
    width: 47px;
    flex: none;
    position: relative;
    display: flex;
    border-top: 2px solid #777;
    margin-top: -1px;
}
.side-handle{
    width: 8px;
    flex: none;
    border-left: 2px solid #777;
    border-right: 2px solid #777;
}
.side-handle::after{
    content: "";
    position: absolute;
    left: 0;
    top: 408px;
    width: 8px;
    height: 73px;
    background: #a8a8a8;
}
.side-handle::before{
    content: "";
    position: absolute;
    left: 1px;
    top: 441px;
    z-index: 1;
    border-left: 5px solid #444;
    border-top: 4px solid transparent;
    border-bottom: 4px solid transparent;
}
.side-deck{
    flex: 1;
    display: flex;
    flex-direction: column;
    align-items: center;
    padding-top: 5px;
    padding-right: 1px;
}
.side-ic{
    width: 26px;
    height: 26px;
    flex: none;
    margin-bottom: 9px;
}
.gear{
    margin-bottom: 6px;
}
.side-rule{
    width: 22px;
    height: 1px;
    background: #2c2c2c;
    margin-bottom: 6px;
}
.side-on{
    width: 32px;
    height: 32px;
    margin-top: -3px;
    display: flex;
    align-items: center;
    justify-content: center;
    border: 1px solid #999;
    border-radius: 4px;
}
.side-ic-on{
    margin-bottom: 0;
}

/* status bar */
.statusbar{
    height: 21px;
    flex: none;
    display: flex;
    align-items: center;
    background: #3c3c3c;
    border-top: 1px solid #8a8a8a;
    font-size: 12px;
    color: #e4e4e4;
}
.cell{
    height: 18px;
    flex: none;
    display: flex;
    align-items: center;
    border-right: 1px solid #333;
    white-space: nowrap;
}
.cell-page{ width: 221px; padding-left: 10px; }
.cell-words{ width: 358px; padding-left: 9px; }
.cell-style{ width: 238px; padding-left: 9px; }
.cell-lang{ width: 240px; padding-left: 4px; justify-content: center; }
.cell-blank{ width: 69px; }
.cell-sel{ width: 29px; padding-left: 3px; }
.cell-save{ width: 28px; justify-content: center; }
.cell-sign{ width: 30px; }
.cell-fill{ width: 367px; }
.cell-views{ width: 76px; padding-left: 13px; gap: 5px; }
.cell-zoom{ width: 143px; padding-left: 9px; }
.st-ic{
    width: 18px;
    height: 14px;
}
.cell-save .st-ic{
    width: 13px;
    height: 13px;
}
.view-ic{
    width: 9px;
    height: 14px;
}
.view-two{
    width: 18px;
    height: 14px;
}
.zoom-sign{
    width: 11px;
    color: #999;
    font-size: 15px;
    line-height: 15px;
    text-align: center;
}
.zoom-track{
    position: relative;
    width: 97px;
    height: 2px;
    margin: 0 2px 0 5px;
    background: #a0a0a0;
}
.zoom-mid{
    position: absolute;
    left: 31px;
    top: -3px;
    width: 2px;
    height: 8px;
    background: #a0a0a0;
}
.zoom-thumb{
    position: absolute;
    left: 43px;
    top: -4px;
    width: 9px;
    height: 10px;
    border-radius: 50%;
    background: #eee;
}
.zoom-val{
    margin-left: 9px;
}
```
